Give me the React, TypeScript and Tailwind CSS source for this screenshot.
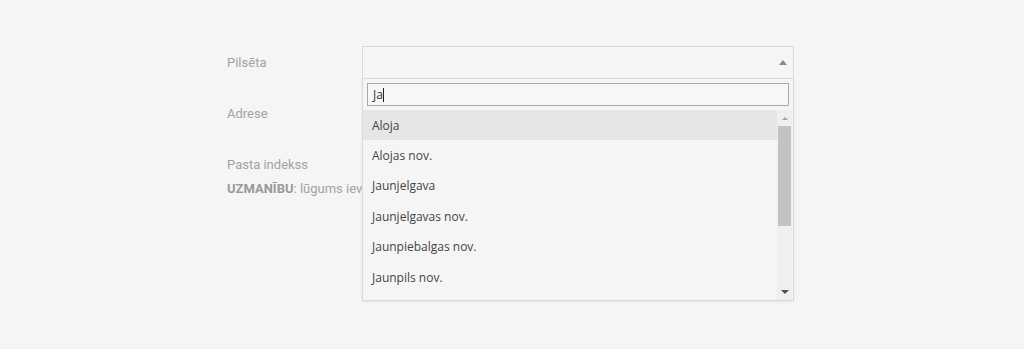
import React from "react";

const items = [
  "Aloja",
  "Alojas nov.",
  "Jaunjelgava",
  "Jaunjelgavas nov.",
  "Jaunpiebalgas nov.",
  "Jaunpils nov.",
];

export default function App() {
  return (
    <div className="min-h-[349px] w-full bg-[#f5f5f5] font-['Roboto',sans-serif] overflow-hidden">
      <div className="pl-[227px] pt-[46px] flex flex-col">
        <div className="flex">
          <div className="w-[135px] h-[33px] flex items-center text-[13px] text-[#a3a3a3]">Pilsēta</div>
          <div className="relative w-[432px]">
            <div className="h-[33px] border border-[#d9d9d9] bg-[#f5f5f5] flex items-center justify-end pr-[6px]">
              <div className="w-0 h-0 border-l-[4px] border-r-[4px] border-b-[5px] border-l-transparent border-r-transparent border-b-[#8a8a8a]" />
            </div>
            <div className="absolute z-10 left-0 top-[33px] w-[432px] border border-t-0 border-[#d9d9d9] bg-[#f5f5f5] shadow-[0_1px_2px_rgba(0,0,0,0.08)]">
              <div className="px-[4px] pt-[4px] pb-[4px]">
                <div className="h-[23px] border border-[#a9a9a9] bg-[#f7f7f7] flex items-center pl-[5px] font-['Open_Sans',sans-serif] text-[12px] text-[#333]">
                  <span>Ja</span>
                  <span className="inline-block w-px h-[14px] bg-[#222]" />
                </div>
              </div>
              <div className="flex h-[190px] overflow-hidden">
                <div className="flex-1 flex flex-col font-['Open_Sans',sans-serif] text-[12px] text-[#444]">
                  {items.map((it, i) => (
                    <div
                      key={it}
                      className={
                        i === 0
                          ? "h-[30.4px] shrink-0 flex items-center pl-[9px] pt-[1px] bg-[#e6e6e6]"
                          : "h-[30.4px] shrink-0 flex items-center pl-[9px] pt-[1px]"
                      }
                    >
                      {it}
                    </div>
                  ))}
                </div>
                <div className="w-[15px] mr-[1px] bg-[#efefef] flex flex-col">
                  <div className="h-[16px] flex items-center justify-center">
                    <div className="w-0 h-0 border-l-[3px] border-r-[3px] border-b-[3px] border-l-transparent border-r-transparent border-b-[#a3a3a3]" />
                  </div>
                  <div className="h-[100px] mx-[1px] bg-[#c2c2c2]" />
                  <div className="flex-1" />
                  <div className="h-[16px] flex items-center justify-center">
                    <div className="w-0 h-0 border-l-[4px] border-r-[4px] border-t-[4px] border-l-transparent border-r-transparent border-t-[#505050]" />
                  </div>
                </div>
              </div>
            </div>
          </div>
        </div>
        <div className="flex mt-[18px]">
          <div className="w-[135px] h-[33px] flex items-center text-[13px] text-[#a3a3a3]">Adrese</div>
          <div className="w-[432px] h-[33px] border border-[#d9d9d9]" />
        </div>
        <div className="flex mt-[18px]">
          <div className="w-[135px] h-[33px] flex items-center text-[13px] text-[#a3a3a3]">Pasta indekss</div>
          <div className="w-[432px] h-[33px] border border-[#d9d9d9]" />
        </div>
        <div className="mt-[0px] w-[135px] overflow-hidden text-[13px] leading-[16px] text-[#a3a3a3] whitespace-nowrap">
          <span className="font-bold text-[#999]">UZMANĪBU</span>: lūgums ievadīt
        </div>
      </div>
    </div>
  );
}
